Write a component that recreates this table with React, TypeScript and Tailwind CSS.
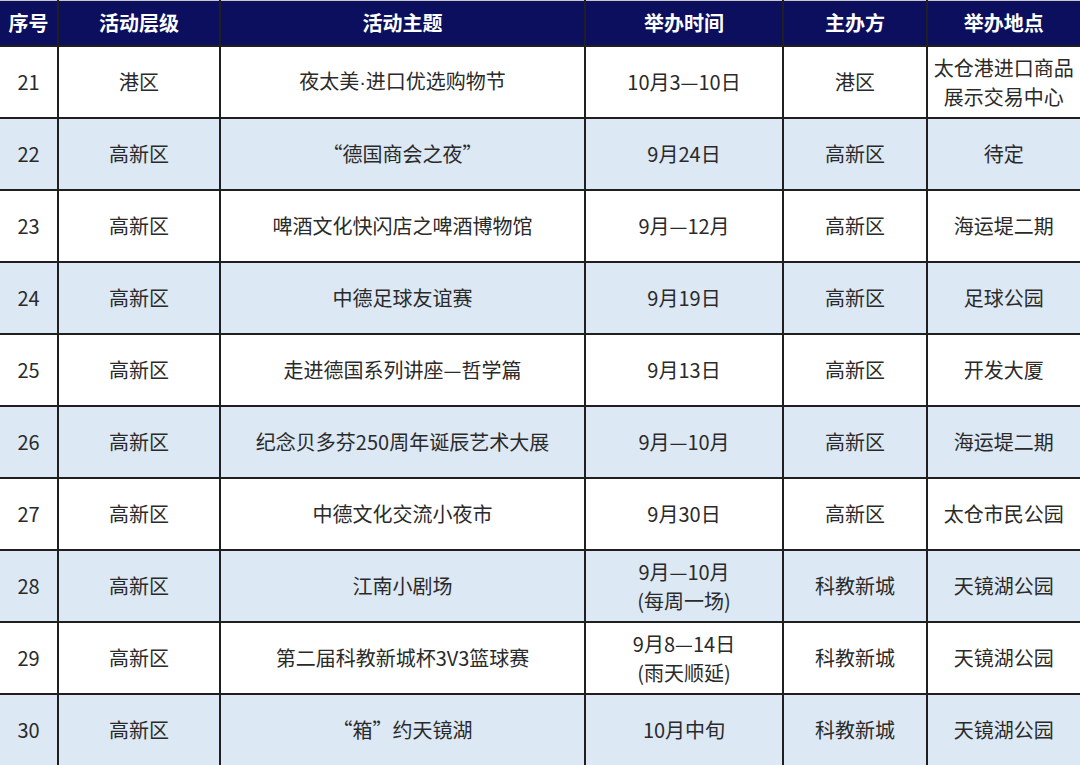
import React from "react";

const Dot = () => <span style={{ fontFamily: '"Liberation Sans", sans-serif' }}>·</span>;

type Row = [string, string, React.ReactNode, string[], string, string[]];

const rows: Row[] = [
  ["21", "港区", <>夜太美<Dot />进口优选购物节</>, ["10月3—10日"], "港区", ["太仓港进口商品", "展示交易中心"]],
  ["22", "高新区", "“德国商会之夜”", ["9月24日"], "高新区", ["待定"]],
  ["23", "高新区", "啤酒文化快闪店之啤酒博物馆", ["9月—12月"], "高新区", ["海运堤二期"]],
  ["24", "高新区", "中德足球友谊赛", ["9月19日"], "高新区", ["足球公园"]],
  ["25", "高新区", "走进德国系列讲座—哲学篇", ["9月13日"], "高新区", ["开发大厦"]],
  ["26", "高新区", "纪念贝多芬250周年诞辰艺术大展", ["9月—10月"], "高新区", ["海运堤二期"]],
  ["27", "高新区", "中德文化交流小夜市", ["9月30日"], "高新区", ["太仓市民公园"]],
  ["28", "高新区", "江南小剧场", ["9月—10月", "(每周一场)"], "科教新城", ["天镜湖公园"]],
  ["29", "高新区", "第二届科教新城杯3V3篮球赛", ["9月8—14日", "(雨天顺延)"], "科教新城", ["天镜湖公园"]],
  ["30", "高新区", "“箱”约天镜湖", ["10月中旬"], "科教新城", ["天镜湖公园"]],
];

const headers = ["序号", "活动层级", "活动主题", "举办时间", "主办方", "举办地点"];
const widths = ["w-[58px]", "w-[162px]", "w-[365px]", "w-[198px]", "w-[144px]", "w-[153px]"];

export default function App() {
  return (
    <div
      className="w-[1080px] h-[765px] bg-white overflow-hidden"
      style={{ fontFamily: '"Noto Sans CJK SC", "Noto Sans", sans-serif' }}
    >
      <table className="w-[1080px] border-collapse table-fixed text-[#2a2a2a]">
        <colgroup>
          {widths.map((w, i) => (
            <col key={i} className={w} />
          ))}
        </colgroup>
        <thead>
          <tr className="h-[45px] bg-[#0b0f5e]">
            {headers.map((h, i) => (
              <th
                key={i}
                className="border-x-2 border-b-2 border-[#1f1f1f] border-t border-t-[#c8c8c8] text-white font-bold text-[20px] leading-none p-0 first:border-l-0 last:border-r-[#bdbdbd] last:border-r"
              >
                {h}
              </th>
            ))}
          </tr>
        </thead>
        <tbody>
          {rows.map((r, i) => (
            <tr key={i} className={`h-[72px] ${i % 2 === 1 ? "bg-[#dce8f4]" : "bg-white"}`}>
              <td className="border-2 border-l-0 border-[#1f1f1f] text-center text-[20px] leading-[26px] p-0">{r[0]}</td>
              <td className="border-2 border-[#1f1f1f] text-center text-[20px] leading-[26px] p-0">{r[1]}</td>
              <td className="border-2 border-[#1f1f1f] text-center text-[20px] leading-[26px] p-0">{r[2]}</td>
              <td className="border-2 border-[#1f1f1f] text-center text-[20px] leading-[29px] p-0">
                {r[3].map((l, k) => (
                  <div key={k}>{l}</div>
                ))}
              </td>
              <td className="border-2 border-[#1f1f1f] text-center text-[20px] leading-[26px] p-0">{r[4]}</td>
              <td className="border-2 border-[#1f1f1f] border-r-[#bdbdbd] border-r text-center text-[20px] leading-[29px] p-0">
                {r[5].map((l, k) => (
                  <div key={k}>{l}</div>
                ))}
              </td>
            </tr>
          ))}
        </tbody>
      </table>
    </div>
  );
}
